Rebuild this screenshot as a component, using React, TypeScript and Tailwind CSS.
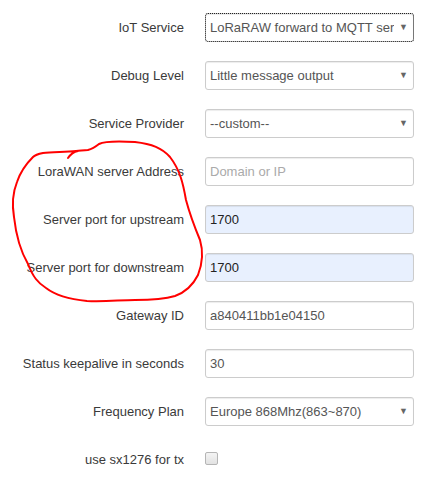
import { ReactNode } from "react"

type Field =
  | { label: string; kind: "select"; value: string; focused?: boolean }
  | { label: string; kind: "input"; value?: string; placeholder?: string; autofill?: boolean }
  | { label: string; kind: "checkbox" }

const fields: Field[] = [
  { label: "IoT Service", kind: "select", value: "LoRaRAW forward to MQTT server", focused: true },
  { label: "Debug Level", kind: "select", value: "Little message output" },
  { label: "Service Provider", kind: "select", value: "--custom--" },
  { label: "LoraWAN server Address", kind: "input", placeholder: "Domain or IP" },
  { label: "Server port for upstream", kind: "input", value: "1700", autofill: true },
  { label: "Server port for downstream", kind: "input", value: "1700", autofill: true },
  { label: "Gateway ID", kind: "input", value: "a840411bb1e04150" },
  { label: "Status keepalive in seconds", kind: "input", value: "30" },
  { label: "Frequency Plan", kind: "select", value: "Europe 868Mhz(863~870)" },
  { label: "use sx1276 for tx", kind: "checkbox" },
]

function Box({ children, autofill, focused }: { children: ReactNode; autofill?: boolean; focused?: boolean }) {
  return (
    <div
      className={`flex h-[29px] w-[209px] items-center overflow-hidden rounded-[3px] border border-[#cccccc] pl-[4px] shadow-[inset_0_1px_1px_rgba(0,0,0,0.075)] ${
        autofill ? "bg-[#e8f0fe]" : "bg-white"
      } ${focused ? "outline outline-1 outline-dotted outline-[#222] -outline-offset-1" : ""}`}
    >
      {children}
    </div>
  )
}

function Control({ field }: { field: Field }) {
  if (field.kind === "checkbox") {
    return (
      <div className="-mt-[3px] h-[13px] w-[13px] rounded-[2px] border border-[#b5b5b5] bg-gradient-to-b from-[#f4f4f4] to-[#e2e2e2]" />
    )
  }
  if (field.kind === "select") {
    return (
      <Box focused={field.focused}>
        <span className="min-w-0 flex-1 overflow-hidden whitespace-nowrap text-[#555555]">{field.value}</span>
        <span className="flex h-full w-[19px] shrink-0 items-center justify-center text-[9px] text-[#666666]">▼</span>
      </Box>
    )
  }
  return (
    <Box autofill={field.autofill}>
      {field.value ? (
        <span className={field.autofill ? "text-[#222222]" : "text-[#555555]"}>{field.value}</span>
      ) : (
        <span className="text-[#aaaaaa]">{field.placeholder}</span>
      )}
    </Box>
  )
}

export default function App() {
  return (
    <div className="relative h-[481px] w-[436px] overflow-hidden bg-white font-['Liberation_Sans',Arial,sans-serif] text-[13px]">
      <div className="flex flex-col gap-[19px] pt-[13px]">
        {fields.map((f) => (
          <div key={f.label} className="flex h-[29px] items-center gap-[21px]">
            <div className="w-[184px] whitespace-nowrap text-right text-[#3a3a3a]">{f.label}</div>
            <Control field={f} />
          </div>
        ))}
      </div>

      {/* hand-drawn red annotation */}
      <svg className="pointer-events-none absolute left-0 top-0" width="436" height="481">
        <path
          d="M88 150 C83 150 80 151 76 151 C65 152 52 152 43 153 C38 154 35 155 33 157 C25 165 20 173 17 182 C13 192 12 205 14 217 C16 235 21 252 28 264 C33 277 38 283 46 288 C55 295 68 299 87 301 C105 302 120 300 135 300 C150 300 165 299 175 296 C186 292 193 285 198 275 C203 262 203 250 200 240 C195 228 190 215 186 200 C183 183 180 170 170 157 C162 148 152 144 135 142 C118 141 105 141 99 144 C94 148 92 149 88 150 M68 158 C70 155 73 152 78 151"
          fill="none"
          stroke="#ff0000"
          strokeWidth="2"
          strokeLinecap="round"
          strokeLinejoin="round"
        />
      </svg>
    </div>
  )
}
